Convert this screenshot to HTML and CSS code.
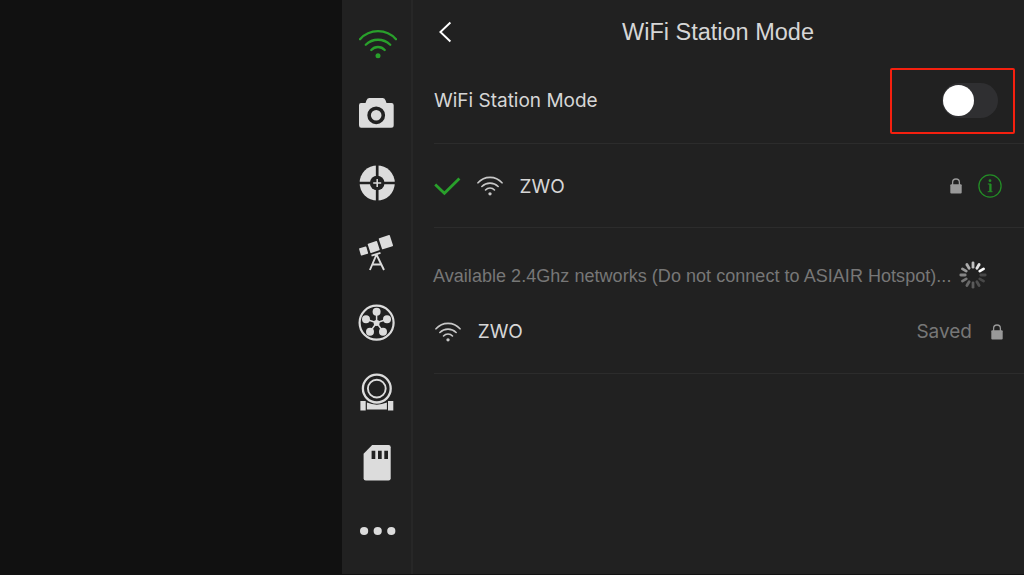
FILE: index.html
```html
<!DOCTYPE html>
<html lang="en">
<head>
<meta charset="utf-8">
<title>WiFi Station Mode</title>
<link rel="stylesheet" href="styles.css">
</head>
<body>
<svg class="defs" width="0" height="0">
  <symbol id="wifi" viewBox="0 0 38 30">
    <path d="M1 10.2A24 24 0 0 1 37 10.2M6.8 15.7A17.5 17.5 0 0 1 31.2 15.7M12.3 21A9 9 0 0 1 25.7 21" fill="none" stroke="currentColor" stroke-linecap="round"/>
    <circle cx="19" cy="26.8" r="2.5" fill="currentColor"/>
  </symbol>
  <symbol id="lock" viewBox="0 0 12 16">
    <rect x=".3" y="6.2" width="11.4" height="9.3" rx="1" fill="currentColor"/>
    <path d="M2.6 7V4.4a3.4 3.4 0 0 1 6.8 0V7" fill="none" stroke="currentColor" stroke-width="1.3"/>
  </symbol>
</svg>
<div class="app">
  <div class="preview"></div>
  <nav class="sidebar">
    <a class="tab tab-active"><svg class="wifi-large"><use href="#wifi"/></svg></a>
    <a class="tab"><svg class="icon" viewBox="342 78 70 70">
      <path d="M361 103h4.5l1-2.7q.9-2.3 3-2.3h13q2.1 0 3 2.3l1 2.7h5q2.2 0 2.2 2.2v20q0 2.5-2.5 2.5h-30q-2.2 0-2.2-2.5v-20q0-2.2 2-2.2z" fill="currentColor"/>
      <circle cx="376.2" cy="115.3" r="7.1" fill="none" stroke="#212121" stroke-width="3.6"/>
    </svg></a>
    <a class="tab"><svg class="icon" viewBox="342 148 70 70">
      <circle cx="377.2" cy="183" r="17.6" fill="currentColor"/>
      <circle cx="377.2" cy="183" r="7.3" fill="#212121"/>
      <path d="M377.2 165v36M359 183h36" stroke="#212121" stroke-width="2.7"/>
      <path d="M377.2 179v8M373.2 183h8" stroke="currentColor" stroke-width="1.5"/>
    </svg></a>
    <a class="tab"><svg class="icon" viewBox="342 218 70 70">
      <g fill="currentColor">
        <rect x="-3.8" y="-3.8" width="7.6" height="7.6" rx=".7" transform="translate(363.6 251) rotate(-16)"/>
        <rect x="-4.9" y="-4.9" width="9.8" height="9.8" rx=".7" transform="translate(373.7 247) rotate(-18)"/>
        <rect x="-5.8" y="-5.8" width="11.6" height="11.6" rx=".7" transform="translate(385.9 242.2) rotate(-18)"/>
      </g>
      <path d="M371.5 255.6l9-2.7M376.3 255l-6.4 15M376.7 255l7.3 15M372.5 264.5h9" fill="none" stroke="currentColor" stroke-width="1.9"/>
    </svg></a>
    <a class="tab"><svg class="icon" viewBox="342 288 70 70">
      <circle cx="376.6" cy="322.7" r="17" fill="none" stroke="currentColor" stroke-width="2.2"/>
      <path d="M376.6 322.7V312M376.6 322.7l-10.4-3.4M376.6 322.7l10.4-3.4M376.6 322.7l-6.4 8.8M376.6 322.7l6.4 8.8" stroke="currentColor" stroke-width="1.5"/>
      <g fill="currentColor"><circle cx="376.6" cy="322.9" r="3"/><circle cx="376.6" cy="311.8" r="4"/><circle cx="366" cy="319.3" r="4"/><circle cx="387" cy="319.3" r="4"/><circle cx="370" cy="331.8" r="4"/><circle cx="383" cy="331.8" r="4"/></g>
    </svg></a>
    <a class="tab"><svg class="icon" viewBox="342 358 70 70">
      <circle cx="376.8" cy="388.6" r="13.9" fill="none" stroke="currentColor" stroke-width="2.3"/>
      <circle cx="376.8" cy="388.6" r="8.9" fill="none" stroke="currentColor" stroke-width="1.9"/>
      <path d="M360.4 401h5.3v9.4h-5.3zM388 401h5.3v9.4H388zM366.9 402.6q9.9 4.2 20 0v6.8h-20z" fill="currentColor"/>
    </svg></a>
    <a class="tab"><svg class="icon" viewBox="342 428 70 70">
      <path d="M372.2 445h16.3q2.2 0 2.2 2.2v31q0 2.2-2.2 2.2h-22.7q-2.2 0-2.2-2.2v-24.5z" fill="currentColor"/>
      <path d="M371.6 450.7h3.7v8.3h-3.7zM378 450.7h3.7v8.3H378zM384.3 450.7h3.7v8.3h-3.7z" fill="#212121"/>
    </svg></a>
    <a class="tab"><svg class="icon" viewBox="342 498 70 70">
      <g fill="currentColor"><circle cx="364.1" cy="531" r="4.1"/><circle cx="377.7" cy="531" r="4.1"/><circle cx="391.3" cy="531" r="4.1"/></g>
    </svg></a>
  </nav>
  <main class="panel">
    <header class="header">
      <svg class="back" viewBox="0 0 14 22"><path d="M12.4 1.5L2.4 11l10 9.5" fill="none" stroke="#fff" stroke-width="1.9"/></svg>
      <h1 class="title">WiFi Station Mode</h1>
    </header>
    <section class="row row-switch">
      <span class="label">WiFi Station Mode</span>
      <div class="highlight"><div class="switch"><div class="knob"></div></div></div>
    </section>
    <section class="row row-connected">
      <svg class="check" viewBox="0 0 28 20"><path d="M1.2 8.5l9.2 8.8L25.4 2.5" fill="none" stroke="#29a02b" stroke-width="2.8"/></svg>
      <svg class="wifi-small"><use href="#wifi"/></svg>
      <span class="label network">ZWO</span>
      <svg class="lock"><use href="#lock"/></svg>
      <svg class="info" viewBox="0 0 24 24"><circle cx="12" cy="12" r="11.1" fill="none" stroke="#238c26" stroke-width="1.3"/><circle cx="12" cy="6.7" r="1.4" fill="#238c26"/><path d="M9.8 10h3.2v7.4M9.7 17.7h4.8" fill="none" stroke="#238c26" stroke-width="1"/><path d="M12.2 10v7.5" stroke="#238c26" stroke-width="1.9"/></svg>
    </section>
    <div class="section-title">
      <span class="hint">Available 2.4Ghz networks (Do not connect to ASIAIR Hotspot)...</span>
      <svg class="spinner" viewBox="-15 -15 30 30" stroke-width="2.8" stroke-linecap="round">
        <path d="M0-7.8V-12.2" stroke="#c2c2c2"/>
        <path d="M0-7.8V-12.2" stroke="#e2e2e2" transform="rotate(30)"/>
        <path d="M0-7.8V-12.2" stroke="#fff" transform="rotate(60)"/>
        <path d="M0-7.8V-12.2" stroke="#484848" transform="rotate(90)"/>
        <path d="M0-7.8V-12.2" stroke="#484848" transform="rotate(120)"/>
        <path d="M0-7.8V-12.2" stroke="#505050" transform="rotate(150)"/>
        <path d="M0-7.8V-12.2" stroke="#5b5b5b" transform="rotate(180)"/>
        <path d="M0-7.8V-12.2" stroke="#686868" transform="rotate(210)"/>
        <path d="M0-7.8V-12.2" stroke="#777" transform="rotate(240)"/>
        <path d="M0-7.8V-12.2" stroke="#858585" transform="rotate(270)"/>
        <path d="M0-7.8V-12.2" stroke="#989898" transform="rotate(300)"/>
        <path d="M0-7.8V-12.2" stroke="#acacac" transform="rotate(330)"/>
      </svg>
    </div>
    <section class="row row-available">
      <svg class="wifi-small"><use href="#wifi"/></svg>
      <span class="label network">ZWO</span>
      <span class="saved">Saved</span>
      <svg class="lock"><use href="#lock"/></svg>
    </section>
  </main>
</div>
</body>
</html>
```
FILE: styles.css
```css
* { box-sizing: border-box; }
body { margin: 0; background: #111; overflow: hidden; }
svg { display: block; flex: none; }
.defs { position: absolute; }
.app { display: flex; width: 1024px; height: 575px; border-bottom: 1px solid #111; font-family: "Liberation Sans", sans-serif; color: #d6d6d6; background: #212121; }
.preview { width: 342px; background: #111; }
.sidebar { width: 71px; padding-top: 8px; border-right: 2px solid #272727; color: #dcdcdc; }
.tab { display: flex; width: 70px; height: 70px; }
.tab-active { color: #29a02b; padding: 20.5px 0 0 17px; }
.icon { width: 70px; height: 70px; }
.wifi-large { width: 38px; height: 30px; stroke-width: 2.3; }
.panel { flex: 1; min-width: 0; display: flex; flex-direction: column; }
.header { height: 64px; display: flex; align-items: center; padding-left: 25px; }
.back { width: 14px; height: 22px; }
.title { flex: 1; margin: 0 0 0 170px; font-size: 23.5px; font-weight: 400; line-height: 28px; white-space: nowrap; }
.row { display: flex; align-items: center; margin-left: 21px; border-bottom: 1px solid #2c2c2c; }
.label { font: 400 19px/24px Inter, sans-serif; white-space: nowrap; }
.row-switch { height: 80px; justify-content: space-between; padding: 0 9px 6px 0; }
.highlight { width: 125px; height: 66px; border: 2px solid #f5200f; border-radius: 2px; display: flex; align-items: center; justify-content: flex-end; padding-right: 15px; }
.switch { width: 56px; height: 35px; border-radius: 18px; background: #2f2f31; padding: 1.5px 0 0 1px; }
.knob { width: 31px; height: 31px; border-radius: 50%; background: #fff; }
.row-connected { height: 84px; }
.check { width: 28px; height: 20px; }
.wifi-small { width: 26px; height: 20px; stroke-width: 2.4; color: #c8c8c8; }
.row-connected .wifi-small { margin-left: 14.5px; }
.network { margin-left: 17px; margin-right: auto; }
.row-connected .network { padding-top: 2px; }
.lock { width: 12px; height: 16px; color: #999; }
.info { width: 24px; height: 24px; margin: 0 22px 0 16px; }
.section-title { height: 62px; display: flex; align-items: flex-end; padding-left: 20px; }
.hint { width: 519px; padding-bottom: 4px; font-size: 18px; line-height: 20px; letter-spacing: .04px; color: #777; white-space: nowrap; }
.spinner { width: 30px; height: 30px; margin-left: 5.5px; }
.row-available { height: 84px; padding-right: 21px; }
.row-available .wifi-small { margin-left: .7px; }
.saved { margin-right: 19px; font: 400 19px/24px Inter, sans-serif; color: #777; }
```
